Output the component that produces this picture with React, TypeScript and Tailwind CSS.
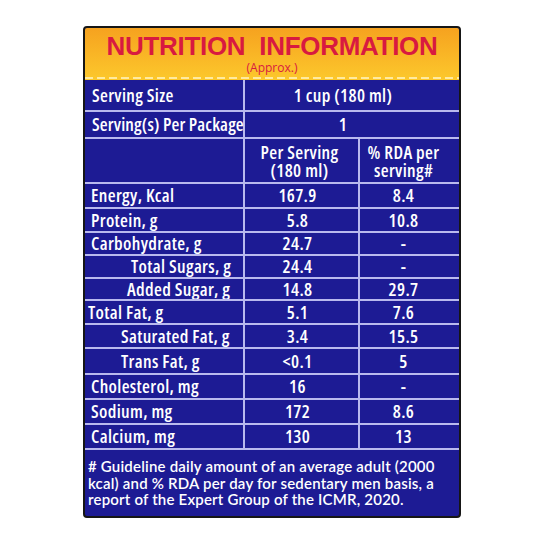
const rows = [
  { label: "Energy, Kcal", per: "167.9", rda: "8.4", h: "h-[25px]", pl: "pl-[6px]" },
  { label: "Protein, g", per: "5.8", rda: "10.8", h: "h-[24px]", pl: "pl-[6px]" },
  { label: "Carbohydrate, g", per: "24.7", rda: "-", h: "h-[23px]", pl: "pl-[6px]" },
  { label: "Total Sugars, g", per: "24.4", rda: "-", h: "h-[23px]", pl: "pl-[46px]" },
  { label: "Added Sugar, g", per: "14.8", rda: "29.7", h: "h-[22px]", pl: "pl-[42px]" },
  { label: "Total Fat, g", per: "5.1", rda: "7.6", h: "h-[24px]", pl: "pl-[3px]" },
  { label: "Saturated Fat, g", per: "3.4", rda: "15.5", h: "h-[24px]", pl: "pl-[36px]" },
  { label: "Trans Fat, g", per: "<0.1", rda: "5", h: "h-[26px]", pl: "pl-[36px]" },
  { label: "Cholesterol, mg", per: "16", rda: "-", h: "h-[25px]", pl: "pl-[6px]" },
  { label: "Sodium, mg", per: "172", rda: "8.6", h: "h-[25px]", pl: "pl-[6px]" },
  { label: "Calcium, mg", per: "130", rda: "13", h: "h-[25px]", pl: "pl-[6px]" },
];

// Open Sans ships a condensed cut, which stands in for the label's narrow face
const narrow = "font-['Open_Sans',sans-serif] font-stretch-[75%] font-semibold tracking-[0.35px]";

export default function App() {
  return (
    <div className="w-[543px] h-[543px] bg-white flex pt-[26px] pl-[83px]">
      <div
        className={`w-[378px] h-[492px] border-2 border-[#161616] rounded-[4px] overflow-hidden flex flex-col bg-[#1d1b94] text-white ${narrow}`}
      >
        {/* header band */}
        <div className="h-[52px] shrink-0 bg-gradient-to-b from-[#f6a21f] to-[#fcc82c] flex flex-col items-center relative">
          <div className="mt-[4px] flex gap-[14px] text-[26px] leading-[28px] font-bold tracking-[-0.3px] text-[#d81a40] font-['Liberation_Sans',sans-serif] font-stretch-normal">
            <span>NUTRITION</span>
            <span>INFORMATION</span>
          </div>
          <div className="mt-[1px] text-[12px] leading-[13px] font-normal tracking-normal text-[#d81a40] font-['Open_Sans',sans-serif] font-stretch-normal">
            (Approx.)
          </div>
          <div className="absolute left-0 right-0 bottom-[1px] h-[2px] bg-[repeating-linear-gradient(90deg,#ffeaa0_0px,#ffeaa0_8px,transparent_8px,transparent_12px)]" />
        </div>

        {/* serving rows */}
        <div className="h-[30px] shrink-0 flex text-[18px]">
          <div className="w-[160px] border-r-2 border-[#b9b9ee] pl-[7px] flex items-center">Serving Size</div>
          <div className="flex-1 flex items-center justify-center pr-[18px]">1 cup (180 ml)</div>
        </div>
        <div className="h-[27px] shrink-0 flex border-t-2 border-[#b9b9ee] text-[18px]">
          <div className="w-[160px] border-r-2 border-[#b9b9ee] pl-[7px] flex items-center whitespace-nowrap tracking-[0.15px]">
            Serving(s) Per Package
          </div>
          <div className="flex-1 flex items-center justify-center pr-[18px]">1</div>
        </div>

        {/* column heads */}
        <div className="h-[45px] shrink-0 flex border-t-2 border-[#b9b9ee] text-[18px] leading-[18px]">
          <div className="w-[160px] border-r-2 border-[#b9b9ee]" />
          <div className="w-[115px] border-r-2 border-[#b9b9ee] flex flex-col items-center justify-center pr-[4px]">
            <span>Per Serving</span>
            <span>(180 ml)</span>
          </div>
          <div className="flex-1 flex flex-col items-center justify-center pr-[12px]">
            <span>% RDA per</span>
            <span>serving#</span>
          </div>
        </div>

        {rows.map((r) => (
          <div key={r.label} className={`${r.h} shrink-0 flex border-t-2 border-[#b9b9ee] text-[18px]`}>
            <div className={`w-[160px] border-r-2 border-[#b9b9ee] ${r.pl} flex items-center whitespace-nowrap`}>
              {r.label}
            </div>
            <div className="w-[115px] border-r-2 border-[#b9b9ee] flex items-center justify-center pr-[8px]">
              {r.per}
            </div>
            <div className="flex-1 flex items-center justify-center pr-[12px]">{r.rda}</div>
          </div>
        ))}

        {/* footnote */}
        <div className="flex-1 border-t-2 border-[#b9b9ee] px-[3px] pt-[8px] text-[15px] leading-[16.5px] tracking-[0.2px] font-semibold font-['Lato',sans-serif] font-stretch-normal">
          # Guideline daily amount of an average adult (2000 kcal) and % RDA per day for sedentary men basis, a
          report of the Expert Group of the ICMR, 2020.
        </div>
      </div>
    </div>
  );
}
